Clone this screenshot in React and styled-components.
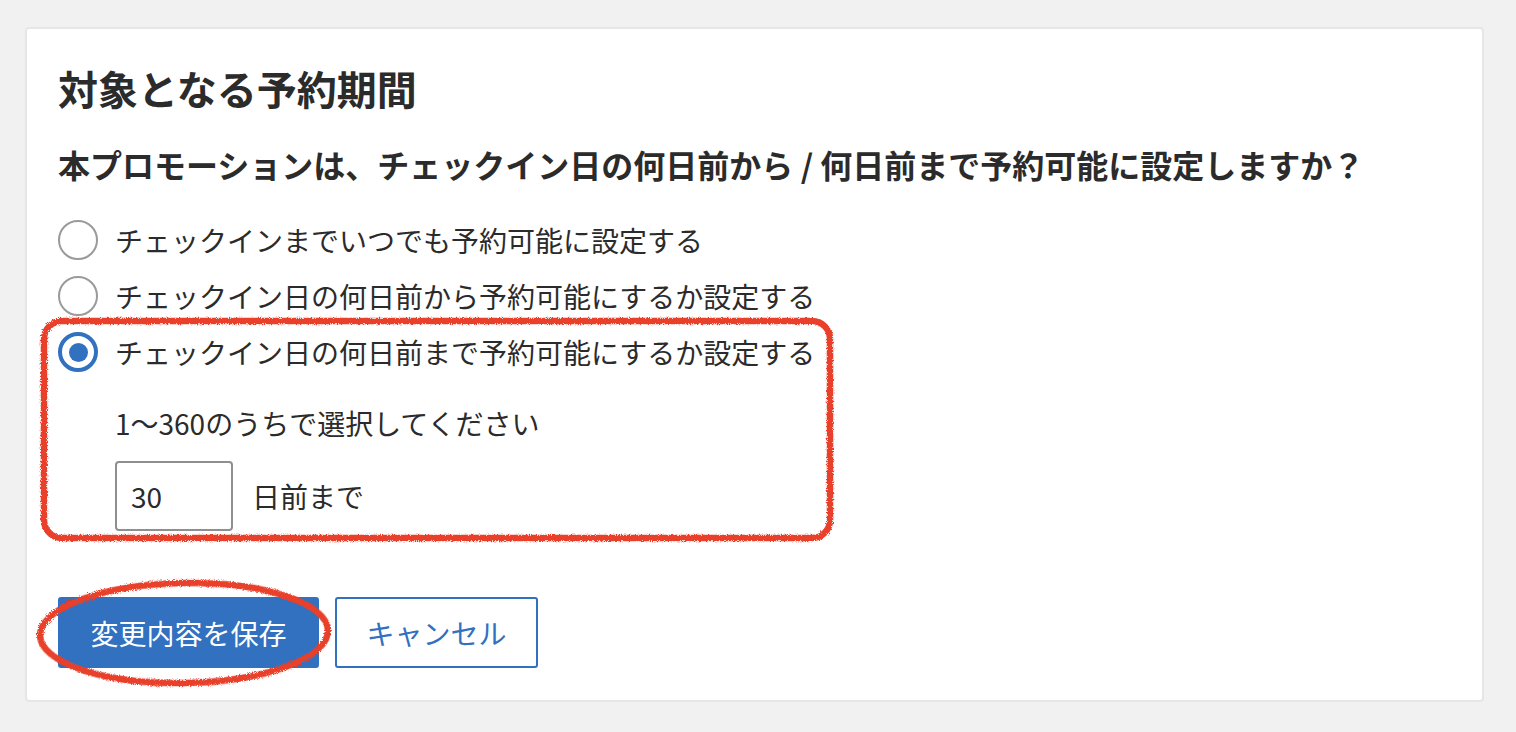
import React, { useState } from 'react'
import styled, { createGlobalStyle } from 'styled-components'

const GlobalStyle = createGlobalStyle`
    body {
        margin: 0;
        background: #f1f1f1;
        font-family: "Noto Sans CJK JP", "Noto Sans", sans-serif;
        color: #2b2b2b;
    }
`

const Page = styled.div`
    padding: 27px 32px 30px 25px;
`

const Card = styled.section`
    position: relative;
    width: 1459px;
    box-sizing: border-box;
    background: #fff;
    border: 2px solid #e6e6e6;
    border-radius: 4px;
    padding: 34px 31px 32px;
`

const Title = styled.h2`
    margin: 0;
    font-size: 40px;
    font-weight: 700;
    line-height: 51px;
`

const Question = styled.h3`
    margin: 28px 0 26px;
    font-size: 32px;
    font-weight: 700;
    line-height: 44px;
`

const Option = styled.label`
    display: flex;
    align-items: center;
    gap: 17px;
    height: 56px;
    font-size: 28px;
    cursor: pointer;
`

const Radio = styled.span`
    width: 40px;
    height: 40px;
    box-sizing: border-box;
    border-radius: 50%;
    border: ${p => (p.$checked ? '4px solid #3171c0' : '2px solid #9a9a9a')};
    display: flex;
    align-items: center;
    justify-content: center;
    flex-shrink: 0;
    &::after {
        content: '';
        display: ${p => (p.$checked ? 'block' : 'none')};
        width: 19px;
        height: 19px;
        border-radius: 50%;
        background: #3171c0;
    }
`

const Detail = styled.div`
    padding-left: 57px;
    margin-top: 23px;
`

const Hint = styled.p`
    margin: 0 0 18px;
    font-size: 28px;
    line-height: 40px;
`

const DaysRow = styled.div`
    display: flex;
    align-items: center;
    gap: 19px;
    font-size: 28px;
`

const DaysInput = styled.input`
    width: 118px;
    height: 70px;
    box-sizing: border-box;
    border: 2px solid #8f8f8f;
    border-radius: 4px;
    padding: 0 14px;
    font-family: inherit;
    font-size: 28px;
    color: #2b2b2b;
    outline: none;
`

const Actions = styled.div`
    display: flex;
    gap: 16px;
    margin-top: 66px;
`

const Button = styled.button`
    height: 71px;
    width: ${p => p.$width}px;
    box-sizing: border-box;
    border-radius: 3px;
    border: 2px solid #3171c0;
    background: ${p => (p.$primary ? '#3171c0' : '#fff')};
    color: ${p => (p.$primary ? '#fff' : '#3171c0')};
    font-family: inherit;
    font-size: 28px;
    cursor: pointer;
`

const Marks = styled.svg`
    position: absolute;
    left: -2px;
    top: -2px;
    width: 1459px;
    height: 674px;
    pointer-events: none;
    overflow: visible;
`

const options = [
    'チェックインまでいつでも予約可能に設定する',
    'チェックイン日の何日前から予約可能にするか設定する',
    'チェックイン日の何日前まで予約可能にするか設定する',
]

export default function App() {
    const [selected, setSelected] = useState(2)
    const [days, setDays] = useState('30')

    return (
        <Page>
            <GlobalStyle />
            <Card>
                <Title>対象となる予約期間</Title>
                <Question>本プロモーションは、チェックイン日の何日前から / 何日前まで予約可能に設定しますか？</Question>
                {options.map((text, i) => (
                    <Option key={i} onClick={() => setSelected(i)}>
                        <Radio $checked={selected === i} />
                        {text}
                    </Option>
                ))}
                <Detail>
                    <Hint>1〜360のうちで選択してください</Hint>
                    <DaysRow>
                        <DaysInput value={days} onChange={e => setDays(e.target.value)} />
                        日前まで
                    </DaysRow>
                </Detail>
                <Actions>
                    <Button $primary $width={261}>変更内容を保存</Button>
                    <Button $width={203}>キャンセル</Button>
                </Actions>

                {/* red hand-drawn annotations */}
                <Marks viewBox="0 0 1459 674">
                    <defs>
                        <filter id="crayon" x="-5%" y="-5%" width="110%" height="110%">
                            <feTurbulence type="fractalNoise" baseFrequency="1.1" numOctaves="2" seed="3" />
                            <feDisplacementMap in="SourceGraphic" scale="4" />
                        </filter>
                    </defs>
                    <g fill="none" stroke="#e8402a" strokeWidth="6.5" filter="url(#crayon)">
                        <rect x="19" y="294" width="786" height="217" rx="18" />
                        <ellipse cx="159" cy="606" rx="144" ry="50" transform="rotate(-1 159 606)" />
                    </g>
                </Marks>
            </Card>
        </Page>
    )
}
